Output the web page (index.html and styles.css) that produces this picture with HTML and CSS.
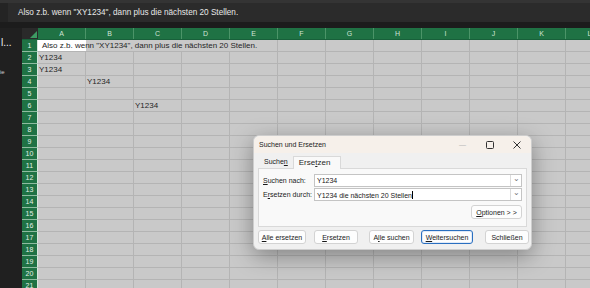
FILE: index.html
```html
<!DOCTYPE html>
<html lang="de">
<head>
    <meta charset="UTF-8">
    <title>Suchen und Ersetzen</title>
    <link rel="stylesheet" href="styles.css">
</head>
<body>
    <div class="formula-bar">
        <div class="fx-left"></div>
        <div class="fx-text">Also z.b. wenn "XY1234", dann plus die nächsten 20 Stellen.</div>
    </div>
    <div class="gap"></div>
    <div class="main">
        <aside class="side">
            <div class="side-title">l...</div>
            <div class="side-note">ie</div>
        </aside>
        <div class="sheet">
            <div class="col-head">
                <div class="corner"></div>
                <div class="ch">A</div><div class="ch">B</div><div class="ch">C</div><div class="ch">D</div>
                <div class="ch">E</div><div class="ch">F</div><div class="ch">G</div><div class="ch">H</div>
                <div class="ch">I</div><div class="ch">J</div><div class="ch">K</div><div class="ch">L</div>
            </div>
            <div class="row"><div class="rn">1</div><div class="cells overflow"><div class="active">Also z.b. wenn "XY1234", dann plus die nächsten 20 Stellen.</div></div></div>
            <div class="row"><div class="rn">2</div><div class="cells"><span class="val">Y1234</span></div></div>
            <div class="row"><div class="rn">3</div><div class="cells"><span class="val">Y1234</span></div></div>
            <div class="row"><div class="rn">4</div><div class="cells"><span class="val col-b">Y1234</span></div></div>
            <div class="row"><div class="rn">5</div><div class="cells"></div></div>
            <div class="row"><div class="rn">6</div><div class="cells"><span class="val col-c">Y1234</span></div></div>
            <div class="row"><div class="rn">7</div><div class="cells"></div></div>
            <div class="row"><div class="rn">8</div><div class="cells"></div></div>
            <div class="row"><div class="rn">9</div><div class="cells"></div></div>
            <div class="row"><div class="rn">10</div><div class="cells"></div></div>
            <div class="row"><div class="rn">11</div><div class="cells"></div></div>
            <div class="row"><div class="rn">12</div><div class="cells"></div></div>
            <div class="row"><div class="rn">13</div><div class="cells"></div></div>
            <div class="row"><div class="rn">14</div><div class="cells"></div></div>
            <div class="row"><div class="rn">15</div><div class="cells"></div></div>
            <div class="row"><div class="rn">16</div><div class="cells"></div></div>
            <div class="row"><div class="rn">17</div><div class="cells"></div></div>
            <div class="row"><div class="rn">18</div><div class="cells"></div></div>
            <div class="row"><div class="rn">19</div><div class="cells"></div></div>
            <div class="row"><div class="rn">20</div><div class="cells"></div></div>
            <div class="row"><div class="rn">21</div><div class="cells"></div></div>
        </div>
    </div>

    <div class="dialog">
        <div class="dlg-title">
            <span class="dlg-name">Suchen und Ersetzen</span>
            <span class="win-btn min">&#8212;</span>
            <span class="win-btn">
                <svg width="8" height="8" viewBox="0 0 8 8"><rect x="0.5" y="0.5" width="7" height="7" rx="1" fill="none" stroke="#333" stroke-width="1"/></svg>
            </span>
            <span class="win-btn close">
                <svg width="8" height="8" viewBox="0 0 8 8"><path d="M0.5 0.5 L7.5 7.5 M7.5 0.5 L0.5 7.5" stroke="#333" stroke-width="1"/></svg>
            </span>
        </div>
        <div class="tabs">
            <div class="tab">Suche<u>n</u></div>
            <div class="tab active">Erse<u>t</u>zen</div>
        </div>
        <div class="panel">
            <div class="field">
                <label><u>S</u>uchen nach:</label>
                <div class="combo"><span class="combo-text">Y1234</span><span class="drop">&#8964;</span></div>
            </div>
            <div class="field">
                <label>E<u>r</u>setzen durch:</label>
                <div class="combo"><span class="combo-text">Y1234 die nächsten 20 Stellen<span class="caret"></span></span><span class="drop">&#8964;</span></div>
            </div>
            <div class="opt-row">
                <button class="btn opt"><u>O</u>ptionen &gt; &gt;</button>
            </div>
        </div>
        <div class="actions">
            <button class="btn b1"><u>A</u>lle ersetzen</button>
            <button class="btn b2"><u>E</u>rsetzen</button>
            <button class="btn b3">A<u>l</u>le suchen</button>
            <button class="btn b4 focus"><u>W</u>eitersuchen</button>
            <button class="btn b5">Schließen</button>
        </div>
    </div>
</body>
</html>
```

FILE: styles.css
```css
body {
    margin: 0;
    background: #1f1f1f;
    font-family: "Liberation Sans", Arial, sans-serif;
    width: 590px;
    height: 288px;
    overflow: hidden;
}
.formula-bar {
    display: flex;
    height: 22px;
    background: #2b2b2b;
    border-top: 3px solid #343434;
    box-sizing: border-box;
}
.fx-left {
    width: 8px;
    background: #242424;
}
.fx-text {
    padding-left: 10px;
    color: #e8e8e8;
    font-size: 8.2px;
    line-height: 19px;
}
.gap {
    height: 6px;
    background: #1c1c1c;
}
.main {
    display: flex;
}
.side {
    width: 22px;
    flex: none;
    background: #202020;
    color: #f0f0f0;
    overflow: hidden;
}
.side-title {
    font-size: 10px;
    margin-top: 9px;
    padding-left: 1px;
    white-space: nowrap;
}
.side-note {
    font-size: 6px;
    margin-top: 21px;
    color: #cfcfcf;
}
.sheet {
    flex: 1;
    min-width: 0;
    overflow: hidden;
}
.col-head {
    display: flex;
    height: 12px;
    background: #1f7244;
    border-bottom: 1px solid #18603a;
    box-sizing: border-box;
}
.corner {
    width: 16px;
    flex: none;
    background: #2a2a2a;
    position: relative;
}
.corner::after {
    content: "";
    position: absolute;
    right: 1px;
    bottom: 1px;
    border-left: 7px solid transparent;
    border-bottom: 7px solid #3d9a63;
}
.ch {
    width: 48px;
    flex: none;
    box-sizing: border-box;
    border-right: 1px solid #4b9468;
    color: #cfe3d6;
    font-size: 7px;
    text-align: center;
    line-height: 11px;
}
.row {
    display: flex;
    height: 12px;
}
.rn {
    width: 16px;
    flex: none;
    box-sizing: border-box;
    background: #1f7244;
    border-bottom: 1px solid #8fbba0;
    border-right: 1px solid #d7e7dc;
    color: #e4efe7;
    font-size: 7px;
    text-align: center;
    line-height: 12px;
}
.cells {
    flex: 1;
    box-sizing: border-box;
    border-bottom: 1px solid #b4b4b4;
    background-color: #c9c9c9;
    background-image: repeating-linear-gradient(to right, transparent 0 47px, #b4b4b4 47px 48px);
    display: flex;
}
.cells.overflow {
    background-image: linear-gradient(#c9c9c9, #c9c9c9), repeating-linear-gradient(to right, transparent 0 47px, #b4b4b4 47px 48px);
    background-size: 239px 100%, auto;
    background-repeat: no-repeat, repeat;
}
.active {
    width: 48px;
    height: 11px;
    background: #ffffff;
    white-space: nowrap;
    font-size: 8px;
    line-height: 11px;
    padding-left: 4px;
    box-sizing: border-box;
    color: #262626;
}
.val {
    font-size: 8px;
    line-height: 11px;
    padding-left: 1px;
    color: #262626;
}
.col-b {
    margin-left: 48px;
}
.col-c {
    margin-left: 96px;
}

/* dialog */
.dialog {
    position: absolute;
    left: 253px;
    top: 135px;
    width: 279px;
    height: 115px;
    box-sizing: border-box;
    background: #f0f0f0;
    border: 1px solid #cdcdcd;
    border-radius: 6px;
    box-shadow: 0 6px 22px rgba(0, 0, 0, 0.35);
    font-size: 7px;
    color: #1a1a1a;
}
.dlg-title {
    display: flex;
    align-items: center;
    height: 17px;
    background: #f6f0ea;
    border-radius: 6px 6px 0 0;
    padding-left: 5px;
}
.dlg-name {
    flex: 1;
}
.win-btn {
    width: 27px;
    display: flex;
    justify-content: center;
    align-items: center;
}
.win-btn.min {
    color: #b5b5b5;
    font-size: 7px;
}
.win-btn.close {
    margin-right: 1px;
}
.tabs {
    display: flex;
    height: 15px;
    padding: 3px 0 0 5px;
    box-sizing: border-box;
}
.tab {
    padding: 0 5px;
    line-height: 12px;
}
.tab.active {
    background: #f9f9f9;
    border: 1px solid #d9d9d9;
    border-bottom: none;
    line-height: 11px;
    padding: 0 5px;
    position: relative;
    z-index: 1;
    height: 13px;
    box-sizing: border-box;
}
.panel {
    margin: 0 4px;
    height: 59px;
    box-sizing: border-box;
    background: #f9f9f9;
    border: 1px solid #d9d9d9;
    padding: 5px 4px 0 4px;
}
.field {
    display: flex;
    align-items: center;
    height: 13px;
    margin-bottom: 1px;
}
.field label {
    width: 51px;
    flex: none;
}
.combo {
    flex: 1;
    height: 13px;
    box-sizing: border-box;
    background: #ffffff;
    border: 1px solid #c4c4c4;
    display: flex;
    align-items: center;
}
.combo-text {
    flex: 1;
    padding-left: 2px;
}
.caret {
    display: inline-block;
    width: 1px;
    height: 8px;
    background: #000;
    vertical-align: -1px;
}
.drop {
    width: 10px;
    height: 11px;
    border-left: 1px solid #dcdcdc;
    color: #777;
    font-size: 8px;
    line-height: 7px;
    text-align: center;
}
.opt-row {
    display: flex;
    justify-content: flex-end;
    margin-top: 4px;
}
.btn {
    font-family: "Liberation Sans", Arial, sans-serif;
    font-size: 7px;
    color: #1a1a1a;
    background: #fdfdfd;
    border: 1px solid #d3d3d3;
    border-radius: 3px;
    height: 14px;
    padding: 0;
}
.opt {
    width: 51px;
}
.actions {
    display: flex;
    padding: 3px 0 0 4px;
}
.b1 { width: 48px; }
.b2 { width: 44px; margin-left: 8px; }
.b3 { width: 45px; margin-left: 11px; }
.b4 { width: 52px; margin-left: 7px; }
.b5 { width: 44px; margin-left: 12px; }
.focus {
    border: 1px solid #2a6fc0;
    box-shadow: inset 0 0 0 1px #dfe9f7;
}
```
